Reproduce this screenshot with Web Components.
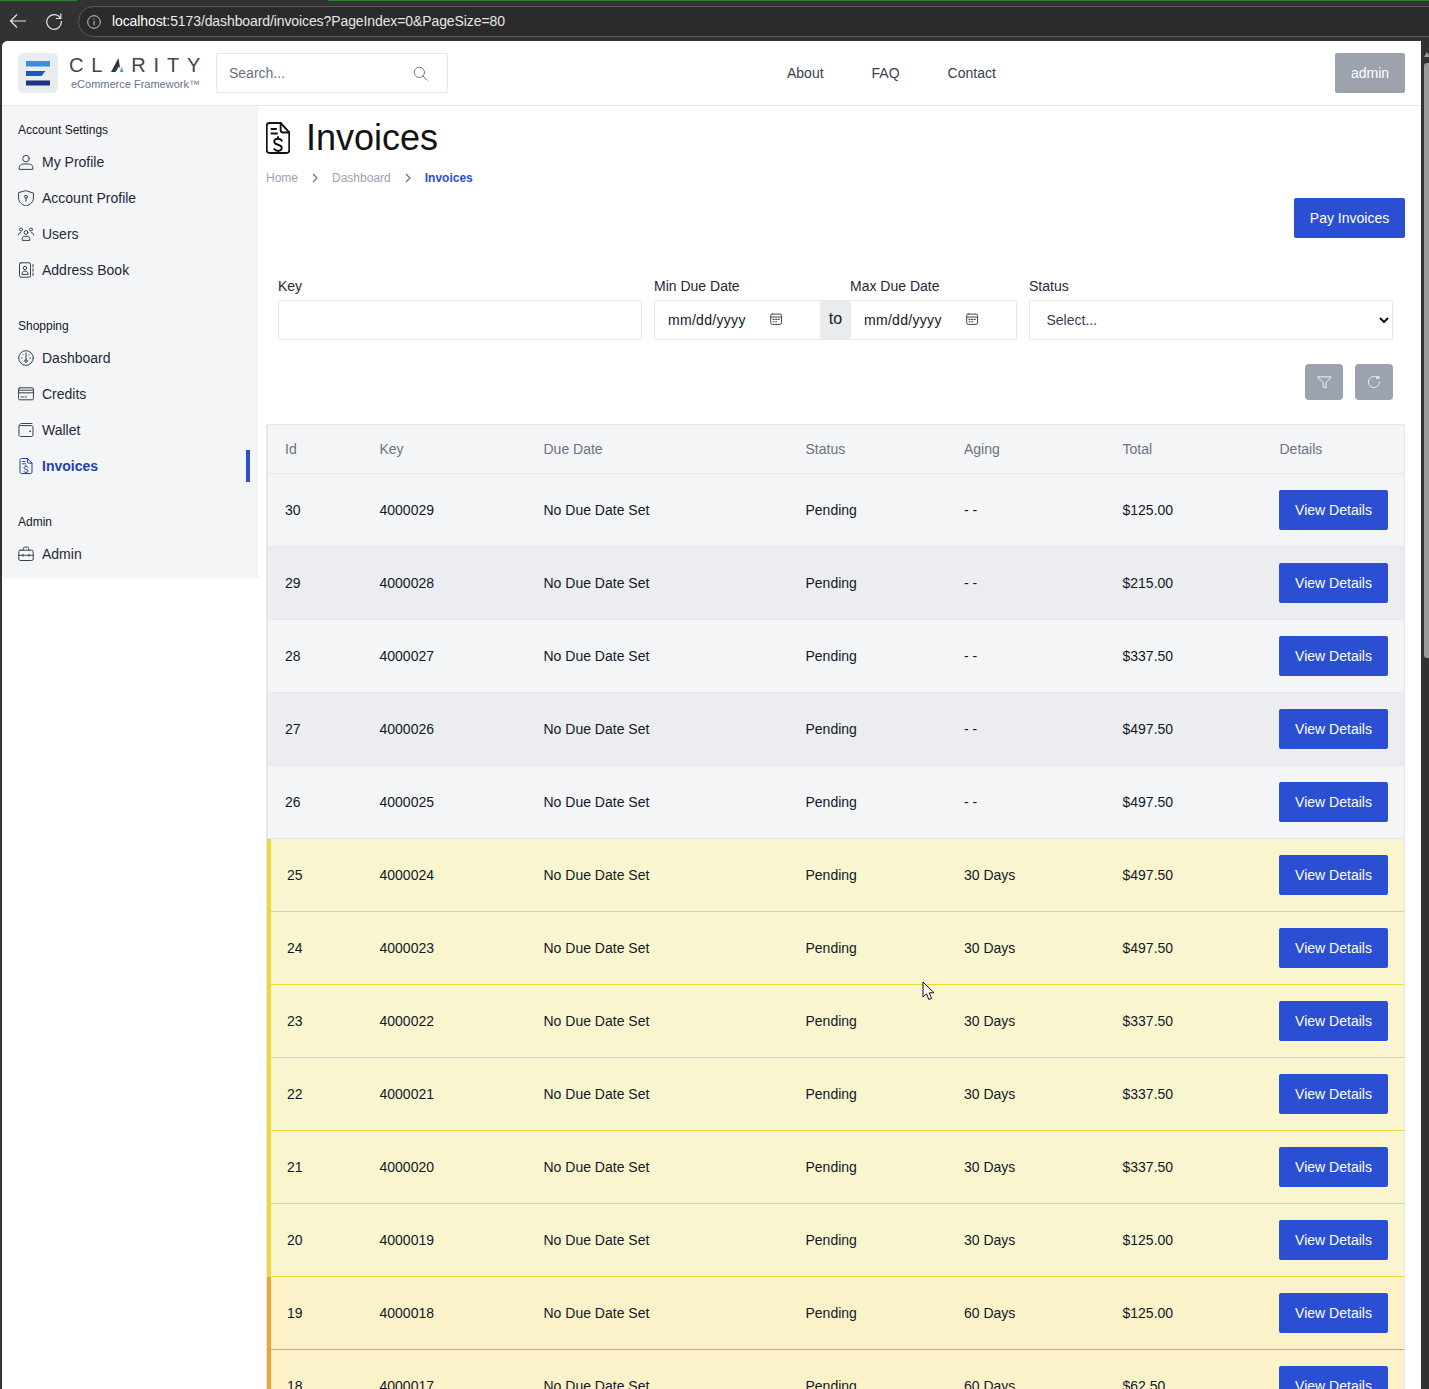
<!DOCTYPE html>
<html>
<head>
<meta charset="utf-8">
<title>Invoices</title>
<style>
  html, body { margin: 0; padding: 0; height: 1389px; overflow: hidden; background: #323232; }
  body { font-family: "Liberation Sans", Arial, sans-serif; }
</style>
</head>
<body>
<browser-window>
  <top-bar></top-bar>
  <div slot="main" style="display:flex;align-items:flex-start">
    <side-nav></side-nav>
    <invoices-page></invoices-page>
  </div>
</browser-window>

<script>
const icons = {
  profile: '<circle cx="8" cy="4.6" r="3.3"/><path d="M1.2 15v-1.2c0-2.2 1.8-3.8 4-3.8h5.6c2.2 0 4 1.6 4 3.8V15z"/>',
  shield: '<path d="M8 .8 15.4 3v5c0 4-3 6.6-7.4 8C3.600 14.600.6 12 .6 8V3z"/><circle cx="8" cy="6.800" r="1.500"/><path d="M8 8.300v3"/>',
  users: '<circle cx="8" cy="6.500" r="1.900"/><path d="M4.200 14v-1.200c0-1.500 1-2.400 2.400-2.400h2.800c1.400 0 2.400.9 2.400 2.400V14z"/><circle cx="3" cy="3.500" r="1.500"/><circle cx="13" cy="3.500" r="1.500"/><path d="M.4 9c0-1.500 1-2.300 2.300-2.300M15.600 9c0-1.500-1-2.300-2.300-2.300"/>',
  book: '<rect x="1.500" y=".8" width="11" height="14.400" rx="1.500"/><circle cx="7" cy="6" r="1.700"/><path d="M3.900 12c0-1.800 1.200-2.900 3.100-2.900s3.100 1.100 3.100 2.900zM15 2.500v2.500M15 6.800v2.500M15 11v2.500"/>',
  gauge: '<circle cx="8" cy="8" r="7.300"/><path d="M8 3v7"/><circle cx="8" cy="11" r="1.300"/><path d="M3.500 8h.6M11.900 8h.6M4.800 4.500l.5.500M11.200 4.500l-.5.500"/>',
  card: '<rect x=".6" y="1.800" width="14.800" height="12" rx="1.200"/><path d="M.6 4.200h14.800M.6 6.800h14.800M3 11h2.500M7 11h1.500"/>',
  wallet: '<path d="M1 4.500V13c0 .9.7 1.500 1.500 1.500h11c.9 0 1.500-.7 1.500-1.500V5c0-.8-.6-1.400-1.500-1.400H2.500M1 4.500c0-1.900 1-3 2.500-3H14"/><circle cx="12" cy="9.300" r=".4"/>',
  invoice: '<path d="M2 1.800C2 1 2.700.5 3.400.5h6L14 5.200v9c0 .8-.6 1.300-1.400 1.300H3.400c-.8 0-1.400-.5-1.400-1.300z"/><path d="M9.400.5v3.400c0 .8.500 1.300 1.300 1.300H14M4.500 3.500h2.500M4.500 5.800h3"/><path d="M10 9.300c-.4-.6-1.100-.9-2-.9-1.200 0-2 .6-2 1.500 0 2 4 1 4 3 0 .9-.8 1.500-2 1.500-.9 0-1.600-.3-2-.9M8 7.500v.9M8 14.400v.6"/>',
  case: '<path d="M5.300 4.200V2.500c0-.8.600-1.400 1.400-1.400h2.600c.8 0 1.400.6 1.400 1.400v1.700"/><rect x=".8" y="4.200" width="14.400" height="10.300" rx="1.500"/><path d="M.8 9.300h14.400M5 8.300v2M11 8.300v2"/>',
  search: '<circle cx="6.800" cy="6.800" r="5.500"/><path d="m10.800 10.800 4.400 4.400"/>',
  calendar: '<rect x=".8" y="1.200" width="12.400" height="11.800" rx="1.800"/><path d="M.8 4.600h12.400"/><path d="M3.500 7.300h1M6.500 7.300h1M9.500 7.300h1M3.500 10h1M6.500 10h1" stroke-width="1.300"/>',
  filter: '<path d="M1 2h14L9.500 8.500V14L6.500 12.500v-4z"/>',
  refresh: '<path d="M12 3A6.400 6.400 0 1 0 14.400 8"/><path d="M11.500 1.600h2.400V4h-2.400z"/>'
}

function icon(name, size = 16, width = 1) {
  return `<svg width="${size}" height="${size}" viewBox="0 0 16 16" fill="none" stroke="currentColor" stroke-width="${width}" stroke-linecap="round" stroke-linejoin="round">${icons[name]}</svg>`
}

class BrowserWindow extends HTMLElement {
  constructor() {
    super()
    this.attachShadow({ mode: 'open' }).innerHTML = `
      <style>
        :host { display: block; position: relative; height: 1389px; background: #323232; overflow: hidden; color: #e8e8e8; }
        .tabline { height: 1px; background: linear-gradient(to right, #2f7d32 0 77px, transparent 77px 328px, #2f7d32 328px); }
        .bar { height: 40px; display: flex; align-items: center; box-sizing: border-box; padding-left: 9px; }
        .nav { display: flex; gap: 18px; width: 69px; flex: none; align-items: center; }
        .address { flex: 1; margin-right: -30px; height: 31px; margin-top: 1px; box-sizing: border-box; border: 1px solid #5c5c5c; border-radius: 16px; background: #2a2a2a; display: flex; align-items: center; padding: 0 0 0 8px; gap: 11px; font: 14px "Liberation Sans", Arial, sans-serif; letter-spacing: -.1px; white-space: nowrap; }
        .address b { font-weight: normal; color: #fff; }
        .url { margin-top: -2px; }
        .info { width: 14px; height: 14px; display: flex; }
        .body { display: flex; height: 1348px; padding-left: 2px; }
        .page { width: 1419px; flex: none; background: #fff; border-top-left-radius: 6px; overflow: hidden; color: #111827; }
        .scrollbar { width: 8px; position: relative; }
        .thumb { position: absolute; left: 3px; right: 0; top: 22px; height: 595px; background: #9b9b9b; border-radius: 3px 0 0 3px; }
        .arrow { position: absolute; left: 3px; top: 11px; width: 0; height: 0; border-left: 3px solid transparent; border-right: 3px solid transparent; border-bottom: 5px solid #9b9b9b; }
      </style>
      <div class="tabline"></div>
      <div class="bar">
        <div class="nav">
          <svg width="18" height="16" viewBox="0 0 18 16" fill="none" stroke="#e8e8e8" stroke-width="1.200"><path d="M17 8H1.500M8 1.500 1.500 8 8 14.500"/></svg>
          <svg width="18" height="18" viewBox="0 0 18 18" fill="none" stroke="#e8e8e8" stroke-width="1.200"><path d="M15.500 6.500A7.300 7.300 0 1 0 16.300 9"/><path d="M15.800 1.500v5h-5"/></svg>
        </div>
        <div class="address">
          <span class="info"><svg width="14" height="14" viewBox="0 0 14 14" fill="none" stroke="#c8c8c8"><circle cx="7" cy="7" r="6.300"/><path d="M7 6v4.300M7 3.500v1.200"/></svg></span>
          <span class="url"><b>localhost</b>:5173/dashboard/invoices?PageIndex=0&amp;PageSize=80</span>
        </div>
      </div>
      <div class="body">
        <div class="page"><slot></slot><slot name="main"></slot></div>
        <div class="scrollbar"><div class="arrow"></div><div class="thumb"></div></div>
      </div>
      <svg style="position:absolute;left:922px;top:981px" width="13" height="20" viewBox="0 0 13 20"><path d="M1 1v15l3.500-3.200 2.400 5.700 2.700-1.100-2.400-5.600H12z" fill="#fff" stroke="#111" stroke-width="1"/></svg>
    `
  }
}
customElements.define('browser-window', BrowserWindow)

class TopBar extends HTMLElement {
  constructor() {
    super()
    this.attachShadow({ mode: 'open' }).innerHTML = `
      <style>
        :host { display: flex; align-items: center; height: 65px; box-sizing: border-box; border-bottom: 1px solid #e5e7eb; padding: 0 16px; background: #fff; position: relative; }
        .mark { width: 40px; height: 40px; background: #e9edf2; border-radius: 5px; flex: none; display: flex; align-items: center; justify-content: center; }
        .brand { width: 132px; margin-left: 11px; flex: none; }
        .word { font-size: 20px; line-height: 20px; letter-spacing: 7.800px; color: #43464d; font-weight: normal; white-space: nowrap; margin-top: -2px; position: relative; }
        .word i { font-style: normal; color: transparent; }
        .word svg { position: absolute; left: 42px; top: 3px; }
        .tag { font-size: 11px; line-height: 12px; font-weight: normal; color: #64748b; white-space: nowrap; margin-left: 2px; margin-top: 3px; }
        .search { width: 232px; height: 40px; box-sizing: border-box; border: 1px solid #e5e7eb; border-radius: 2px; margin-left: 15px; display: flex; align-items: center; justify-content: space-between; padding: 0 19px 0 12px; font-size: 14px; color: #6b7280; flex: none; }
        .search svg { color: #6b7280; }
        nav { display: flex; gap: 48px; font-size: 14px; color: #374151; margin-left: 339px; }
        .user { margin-left: auto; width: 70px; height: 40px; background: #9ca3af; color: #fff; border-radius: 2px; display: flex; align-items: center; justify-content: center; font-size: 14px; }
      </style>
      <div class="mark">
        <svg width="24" height="25" viewBox="0 0 24 25"><path d="M0 0h24v5.500H0z" fill="#3a8fdc"/><path d="M0 10h19.500l-4 5H0z" fill="#2452c8"/><path d="M0 19.500h24v5H0z" fill="#1f3480"/></svg>
      </div>
      <div class="brand">
        <div class="word">CL<i>A</i>RITY<svg width="16" height="14" viewBox="0 0 16 14"><path d="M7.500 0 0 14h4.500L8 8.500 9.200 10.500z" fill="#33363d"/><path d="M10.500 8.500 8.800 14h3.700z" fill="#4aa3de"/></svg></div>
        <div class="tag">eCommerce Framework™</div>
      </div>
      <div class="search"><span>Search...</span>${icon('search', 15)}</div>
      <nav><span>About</span><span>FAQ</span><span>Contact</span></nav>
      <div class="user">admin</div>
    `
  }
}
customElements.define('top-bar', TopBar)

class SideNav extends HTMLElement {
  constructor() {
    super()
    const sections = [
      ['Account Settings', [['My Profile', 'profile'], ['Account Profile', 'shield'], ['Users', 'users'], ['Address Book', 'book']]],
      ['Shopping', [['Dashboard', 'gauge'], ['Credits', 'card'], ['Wallet', 'wallet'], ['Invoices', 'invoice', true]]],
      ['Admin', [['Admin', 'case']]]
    ]
    const html = sections.map(([title, items]) => `
      <section>
        <h3>${title}</h3>
        ${items.map(([label, ic, active]) => `<a class="${active ? 'active' : ''}">${icon(ic, 16)}<span>${label}</span></a>`).join('')}
      </section>`).join('')
    this.attachShadow({ mode: 'open' }).innerHTML = `
      <style>
        :host { display: block; width: 256px; flex: none; height: 472px; box-sizing: border-box; background: #f4f5f7; padding: 16px 8px 0 16px; }
        section { margin-bottom: 32px; }
        h3 { margin: 0 0 8px; font-size: 12px; line-height: 16px; font-weight: normal; color: #111827; }
        a { display: flex; align-items: center; gap: 8px; height: 32px; margin-bottom: 4px; font-size: 14px; color: #1f2937; position: relative; }
        a svg { color: #374151; flex: none; }
        a.active { color: #1e40af; font-weight: bold; }
        a.active svg { color: #1e40af; }
        a.active::after { content: ""; position: absolute; right: 0; top: 0; bottom: 0; width: 4px; background: #2a4fd6; }
      </style>
      ${html}
    `
  }
}
customElements.define('side-nav', SideNav)

class InvoiceRow extends HTMLElement {
  static get observedAttributes() { return ['cells'] }
  constructor() {
    super()
    this.attachShadow({ mode: 'open' }).innerHTML = `
      <style>
        :host { display: grid; grid-template-columns: 95.500px var(--invoice-cols); align-items: center; height: 73px; box-sizing: border-box; border-bottom: 1px solid #e5e7eb; border-left: 1px solid #e5e7eb; font-size: 14px; color: #111827; background: #f4f5f7; }
        :host([tone="alt"]) { background: #ebedf0; }
        :host([tone="warn"]) { grid-template-columns: 92.500px var(--invoice-cols); background: #f9f6cf; border-left: 4px solid #ecd93c; border-bottom-color: #ecd93c; }
        :host([tone="late"]) { grid-template-columns: 92.500px var(--invoice-cols); background: #fcf2c9; border-left: 4px solid #eda52f; border-bottom-color: #eda52f; }
        span { padding-left: 16px; white-space: nowrap; }
        .first { padding-left: 17px; }
        :host([tone="warn"]) .first, :host([tone="late"]) .first { padding-left: 16px; }
        a { display: flex; align-items: center; justify-content: center; width: 109px; height: 40px; margin-left: 15.500px; background: #2a4fd3; color: #fff; border-radius: 2px; }
      </style>
      <span class="first"></span><span></span><span></span><span></span><span></span><span></span>
      <a>View Details</a>
    `
  }
  attributeChangedCallback(name, oldValue, newValue) {
    const cells = newValue.split('|')
    this.shadowRoot.querySelectorAll('span').forEach((el, i) => { el.textContent = cells[i] })
  }
}
customElements.define('invoice-row', InvoiceRow)

class InvoiceTable extends HTMLElement {
  constructor() {
    super()
    const rows = [
      [30, '$125.00', '- -', ''], [29, '$215.00', '- -', 'alt'], [28, '$337.50', '- -', ''], [27, '$497.50', '- -', 'alt'], [26, '$497.50', '- -', ''],
      [25, '$497.50', '30 Days', 'warn'], [24, '$497.50', '30 Days', 'warn'], [23, '$337.50', '30 Days', 'warn'], [22, '$337.50', '30 Days', 'warn'],
      [21, '$337.50', '30 Days', 'warn'], [20, '$125.00', '30 Days', 'warn'], [19, '$125.00', '60 Days', 'late'], [18, '$62.50', '60 Days', 'late']
    ]
    const body = rows.map(([id, total, aging, tone]) =>
      `<invoice-row tone="${tone}" cells="${id}|${3999999 + id}|No Due Date Set|Pending|${aging}|${total}"></invoice-row>`).join('')
    const heads = ['Id', 'Key', 'Due Date', 'Status', 'Aging', 'Total', 'Details']
    this.attachShadow({ mode: 'open' }).innerHTML = `
      <style>
        :host { display: block; --invoice-cols: 164px 262px 158.500px 158.500px 157px 140.500px; border: 1px solid #e5e7eb; border-bottom: 0; background: #f4f5f7; }
        .head { display: grid; grid-template-columns: 95.500px var(--invoice-cols); align-items: center; height: 49px; box-sizing: border-box; border-bottom: 1px solid #e5e7eb; border-left: 1px solid #e5e7eb; font-size: 14px; color: #6b7280; }
        .head span { padding-left: 16px; }
        .head span:first-child { padding-left: 17px; }
      </style>
      <div class="head">${heads.map(h => `<span>${h}</span>`).join('')}</div>
      ${body}
    `
  }
}
customElements.define('invoice-table', InvoiceTable)

class InvoiceFilters extends HTMLElement {
  constructor() {
    super()
    const dateField = `<div class="date"><span>mm/dd/yyyy</span>${icon('calendar', 14, 1.1)}</div>`
    this.attachShadow({ mode: 'open' }).innerHTML = `
      <style>
        :host { display: grid; grid-template-columns: 364px 363px 364px; gap: 12px; padding: 0 12px; font-size: 14px; color: #111827; }
        label { display: block; line-height: 16px; margin-bottom: 6px; color: #1f2937; }
        .box { height: 40px; box-sizing: border-box; border: 1px solid #e5e7eb; border-radius: 2px; background: #fff; }
        .labels { display: grid; grid-template-columns: 196px 167px; }
        .dates { display: grid; grid-template-columns: 165px 31px 1fr; overflow: hidden; }
        .date { display: flex; align-items: center; padding-left: 13px; }
        .date span { width: 102px; letter-spacing: .3px; }
        .date svg { color: #374151; }
        .to { background: #e9ebef; display: flex; align-items: center; justify-content: center; font-size: 16px; padding-bottom: 2px; box-sizing: border-box; }
        .select { display: flex; align-items: center; justify-content: space-between; padding: 0 3px 0 16.500px; color: #374151; }
      </style>
      <div>
        <label>Key</label>
        <div class="box"></div>
      </div>
      <div>
        <div class="labels"><label>Min Due Date</label><label>Max Due Date</label></div>
        <div class="box dates">${dateField}<div class="to">to</div>${dateField}</div>
      </div>
      <div>
        <label>Status</label>
        <div class="box select"><span>Select...</span><svg width="10" height="7" viewBox="0 0 10 7" fill="none" stroke="#111" stroke-width="2"><path d="m1 1 4 4 4-4"/></svg></div>
      </div>
    `
  }
}
customElements.define('invoice-filters', InvoiceFilters)

class InvoicesPage extends HTMLElement {
  constructor() {
    super()
    this.attachShadow({ mode: 'open' }).innerHTML = `
      <style>
        :host { display: block; flex: 1; min-width: 0; padding: 0 16px 0 8px; }
        .title { display: flex; align-items: center; gap: 16px; height: 64px; }
        .title svg { color: #111; }
        h1 { margin: 0; font-size: 36px; line-height: 40px; font-weight: normal; color: #111; }
        .crumbs { display: flex; align-items: center; height: 16px; font-size: 12px; color: #9ca3af; }
        .crumbs svg { margin: 0 13px; color: #6b7280; flex: none; }
        .crumbs b { color: #2a4fd3; }
        .actions { display: flex; justify-content: flex-end; margin-top: 12px; }
        .pay { width: 111px; height: 40px; display: flex; align-items: center; justify-content: center; background: #2a4fd3; color: #fff; font-size: 14px; border-radius: 2px; }
        invoice-filters { margin-top: 40px; }
        .tools { display: flex; justify-content: flex-end; gap: 12px; margin: 24px 12px 24px 0; }
        .tool { width: 38px; height: 36px; background: #9ca3af; color: #fff; border-radius: 4px; display: flex; align-items: center; justify-content: center; }
      </style>
      <div class="title"><svg width="24" height="32" viewBox="1.600 0 12.800 16" preserveAspectRatio="none" fill="none" stroke="currentColor" stroke-width="1" stroke-linecap="round" stroke-linejoin="round">${icons.invoice}</svg><h1>Invoices</h1></div>
      <div class="crumbs"><span>Home</span><svg width="8" height="10" viewBox="0 0 8 10" fill="none" stroke="currentColor" stroke-width="1.200"><path d="m2 1 4 4-4 4"/></svg><span>Dashboard</span><svg width="8" height="10" viewBox="0 0 8 10" fill="none" stroke="currentColor" stroke-width="1.200"><path d="m2 1 4 4-4 4"/></svg><b>Invoices</b></div>
      <div class="actions"><div class="pay">Pay Invoices</div></div>
      <invoice-filters></invoice-filters>
      <div class="tools"><div class="tool">${icon('filter', 15, .9)}</div><div class="tool">${icon('refresh', 14, .9)}</div></div>
      <invoice-table></invoice-table>
    `
  }
}
customElements.define('invoices-page', InvoicesPage)
</script>
</body>
</html>
